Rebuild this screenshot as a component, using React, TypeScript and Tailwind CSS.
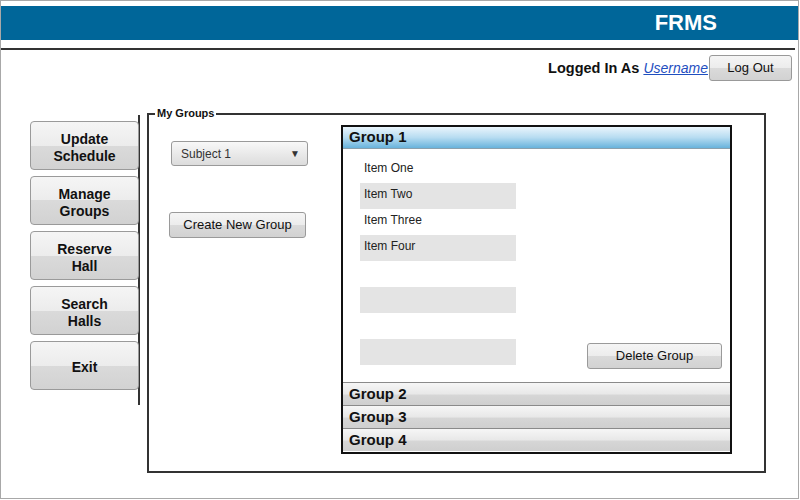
import React from "react";

const btnBg =
  "bg-[linear-gradient(#f5f5f5_0%,#ececec_50%,#dadada_50%,#d2d2d2_100%)]";

function SideButton({ lines }: { lines: string[] }) {
  return (
    <div
      className={`w-[109px] h-[49px] rounded-[4px] border border-[#9a9a9a] ${btnBg} flex flex-col items-center justify-center pt-[4px] text-[14px] leading-[17px] font-bold text-[#111]`}
    >
      {lines.map((l) => (
        <span key={l}>{l}</span>
      ))}
    </div>
  );
}

function GroupHeader({ label }: { label: string }) {
  return (
    <div className="h-[23px] border-t border-[#8a8a8a] bg-[linear-gradient(#f6f6f6_0%,#e8e8e8_50%,#d6d6d6_55%,#cfcfcf_100%)] pl-[6px] pt-[1px] flex items-center text-[15px] font-bold text-[#111]">
      {label}
    </div>
  );
}

export default function App() {
  const rows: { text: string; gray: boolean }[] = [
    { text: "Item One", gray: false },
    { text: "Item Two", gray: true },
    { text: "Item Three", gray: false },
    { text: "Item Four", gray: true },
    { text: "", gray: false },
    { text: "", gray: true },
    { text: "", gray: false },
    { text: "", gray: true },
  ];
  return (
    <div
      className="w-[799px] h-[499px] border border-[#a8a8a8] bg-white overflow-hidden"
      style={{ fontFamily: '"Liberation Sans", Arial, sans-serif' }}
    >
      {/* header */}
      <div className="mt-[5px] h-[34px] bg-[#006699] flex items-center justify-end pr-[81px]">
        <span className="text-white font-bold text-[22px] leading-none">FRMS</span>
      </div>
      <div className="mt-[8px] h-[2px] bg-[#333] mr-[3px]" />

      {/* login row */}
      <div className="mt-[5px] flex items-center justify-end pr-[6px]">
        <span className="text-[14.5px] font-bold text-[#111] mr-[4px] mt-[1px]">Logged In As</span>
        <a className="text-[14px] italic underline text-[#1f4fbf] mt-[1px]">Username</a>
        <div
          className={`ml-[1px] w-[83px] h-[26px] rounded-[3px] border border-[#999] ${btnBg} flex items-center justify-center text-[13px] text-[#111]`}
        >
          Log Out
        </div>
      </div>

      {/* main */}
      <div className="mt-[32px] flex items-start">
        {/* sidebar */}
        <div className="ml-[29px] mt-[2px] h-[290px] w-[110px] border-r-2 border-[#333] pt-[6px] flex flex-col gap-[6px]">
          <SideButton lines={["Update", "Schedule"]} />
          <SideButton lines={["Manage", "Groups"]} />
          <SideButton lines={["Reserve", "Hall"]} />
          <SideButton lines={["Search", "Halls"]} />
          <SideButton lines={["Exit"]} />
        </div>

        {/* fieldset */}
        <div className="relative ml-[7px] w-[619px] h-[360px] border-2 border-[#333] flex pt-[10px] pl-[20px]">
          <span className="absolute left-[6px] top-[-8px] bg-white px-[2px] text-[11px] leading-[12px] font-bold text-[#111]">
            My Groups
          </span>

          {/* left column */}
          <div className="w-[138px] pt-[16px]">
            <div className="ml-[2px] w-[137px] h-[25px] rounded-[3px] border border-[#9a9a9a] bg-[linear-gradient(#f8f8f8,#dcdcdc)] flex items-center justify-between pl-[9px] pr-[7px] text-[12px] text-[#333]">
              <span>Subject 1</span>
              <span className="text-[10px] text-[#333]">▼</span>
            </div>
            <div
              className={`mt-[46px] w-[137px] h-[26px] rounded-[3px] border border-[#9a9a9a] ${btnBg} flex items-center justify-center text-[13px] text-[#111]`}
            >
              Create New Group
            </div>
          </div>

          {/* accordion */}
          <div className="ml-[34px] w-[391px] h-[329px] border-2 border-[#111] flex flex-col">
            <div className="h-[22px] border-b border-[#8aa0ad] bg-[linear-gradient(#eaf5fc_0%,#b7dcf1_50%,#68b3dc_100%)] pl-[6px] flex items-center text-[15px] font-bold text-[#111]">
              Group 1
            </div>
            <div className="relative h-[233px] pt-[8px] pl-[17px]">
              {rows.map((r, i) => (
                <div
                  key={i}
                  className={`w-[156px] h-[26px] pl-[4px] pt-[4px] leading-[14px] text-[12px] text-[#222] ${r.gray ? "bg-[#e4e4e4]" : ""}`}
                >
                  {r.text}
                </div>
              ))}
              <div
                className={`absolute right-[8px] bottom-[13px] w-[135px] h-[26px] rounded-[3px] border border-[#9a9a9a] ${btnBg} flex items-center justify-center text-[13px] text-[#111]`}
              >
                Delete Group
              </div>
            </div>
            <GroupHeader label="Group 2" />
            <GroupHeader label="Group 3" />
            <GroupHeader label="Group 4" />
          </div>
        </div>
      </div>
    </div>
  );
}
